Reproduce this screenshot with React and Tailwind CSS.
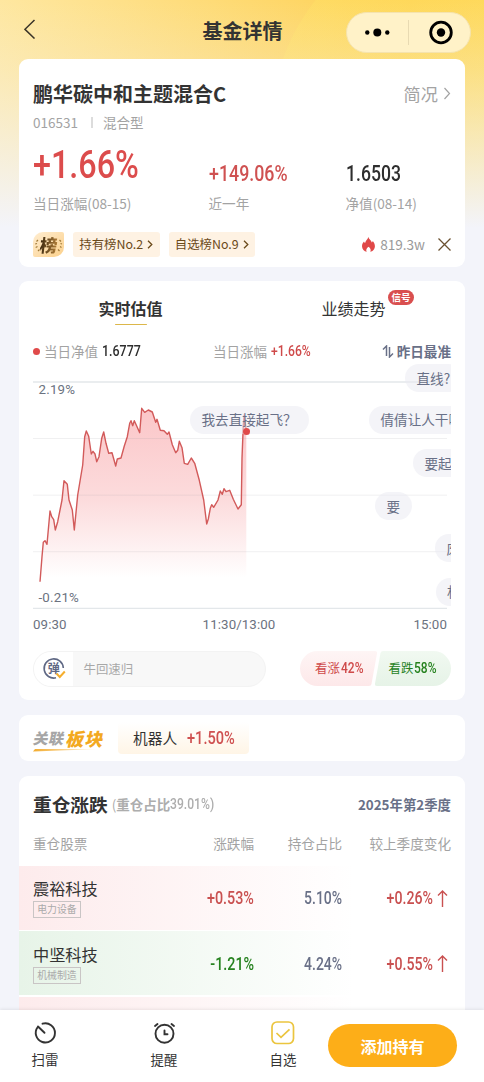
import React from 'react';

const stocks = [
  { name: '震裕科技', tag: '电力设备', change: '+0.53%', ratio: '5.10%', diff: '+0.26%', up: true },
  { name: '中坚科技', tag: '机械制造', change: '-1.21%', ratio: '4.24%', diff: '+0.55%', up: false },
];

// intraday valuation curve, in chart pixels
const points = [
  [7, 219.7], [9, 194.7], [10.3, 180.3], [12, 178.7], [14, 182.3], [17, 149], [18.7, 154.7], [20.7, 157.7],
  [22.3, 168], [24.7, 159.7], [29, 138], [31, 118.7], [34.3, 122.3], [36, 138], [39.3, 148], [41.3, 168],
  [44.7, 133], [49.7, 103], [51.7, 74.7], [53.3, 69], [55.7, 74.3], [58.3, 92], [60, 89.3], [62, 92],
  [63.7, 99.7], [66, 94.7], [68.7, 76.3], [70.7, 70], [73, 81.3], [75.7, 91.3], [79, 90.7], [82.7, 104],
  [84.3, 97], [88, 96], [91.3, 84], [94.3, 74.7], [96.7, 61.3], [98, 58.7], [99.7, 63.7], [101.3, 58.7],
  [103.7, 64], [106.7, 70.7], [108.7, 46.3], [111.7, 50.3], [115.3, 48], [119.3, 50], [122.7, 60.3], [124, 57.3],
  [127.3, 68.3], [131, 68.7], [134.3, 72.3], [136, 70], [139.3, 82.7], [142.7, 90.7], [144.7, 88.3], [146.3, 79.3],
  [149, 85.7], [151.3, 101.3], [154.7, 102.3], [158.3, 96], [161.7, 101.3], [166.3, 118.3], [170.7, 138], [173.7, 162],
  [175.3, 157], [177.3, 146.3], [178.7, 142.7], [180.7, 145.3], [185, 138], [187.3, 129], [189.3, 132.3], [191, 126.7],
  [193, 129.7], [196.7, 128.3], [200.3, 137.3], [205, 147], [208.3, 142.7], [209, 96.3], [210.3, 63], [211.3, 53],
  [213.3, 69],
];

const line = points.map((p) => p.join(',')).join(' ');

// condensed digits used for every price and percentage
function Num({ children, className = '' }) {
  return (
    <span className={`inline-block whitespace-nowrap font-['Roboto',sans-serif] font-medium ${className}`}>
      {children}
    </span>
  );
}

function Bubble({ children, className }) {
  return (
    <span className={`absolute flex h-7 items-center whitespace-nowrap rounded-full bg-[#eaeaf1]/50 pl-[11.5px] pr-[12px] text-[13.6px] text-[#697087] ${className}`}>
      {children}
    </span>
  );
}

function Header() {
  return (
    <header className="relative flex h-[59px] shrink-0 items-start justify-between pl-6 pr-[13px]">
      <svg width="115" height="20" viewBox="0 0 115 20" className="mt-[19px]" fill="none" stroke="#3a3428" strokeWidth="1.5">
        <path d="M10.5 1 1 10.3l9.500 9.200" />
      </svg>
      <h1 className="mt-[17px] h-7 text-[20px] font-bold leading-7 text-[#333]">基金详情</h1>
      <div className="mt-3 flex h-[41px] w-[125px] items-center rounded-full border border-[#f5e3ae] bg-[#fff2c8]">
        <svg width="123" height="39" viewBox="0 0 123 39" fill="none">
          <circle cx="20.300" cy="19.500" r="2.200" fill="#000" />
          <circle cx="30.300" cy="19.500" r="4" fill="#000" />
          <circle cx="40.300" cy="19.500" r="2.200" fill="#000" />
          <path d="M61.500 7v25" stroke="#e8dab2" />
          <circle cx="94" cy="19.500" r="10.300" stroke="#000" strokeWidth="2.800" />
          <circle cx="94" cy="19.500" r="4.200" fill="#000" />
        </svg>
      </div>
    </header>
  );
}

function RankBadge() {
  return (
    <div className="relative flex h-[25px] w-[31px] items-center justify-center rounded-bl-[2px] rounded-br-[10px] rounded-tl-[10px] rounded-tr-[2px] bg-linear-to-br from-[#ffedd0] to-[#fbd08a]">
      <svg width="31" height="25" viewBox="0 0 31 25" className="absolute inset-0" fill="none" stroke="#a07a38" strokeWidth="1.200">
        <path d="M5 8 3.500 9.500M4 11.500l-1.800.5M4.500 14.500l-1.800 1M6.500 17.500 5 19M26.500 8 28 9.500M27.500 11.500l1.500.5M27 14.500l1.500 1M25 17.500l1.500 1.500" />
      </svg>
      <span className="relative -skew-x-6 bg-linear-to-r from-[#3d2a10] to-[#b5813a] bg-clip-text text-[17.500px] font-black leading-[25px] text-transparent">榜</span>
    </div>
  );
}

function Chip({ children }) {
  return (
    <span className="flex h-[25px] w-[86.500px] items-center justify-center rounded-[3px] bg-[#fef2e3] text-[12.400px] text-[#6b4a1a]">
      {children}
      <svg width="6" height="9" viewBox="0 0 6 9" className="ml-1" fill="none" stroke="#6b4a1a" strokeWidth="1.300">
        <path d="m1 .8 3.800 3.700L1 8.200" />
      </svg>
    </span>
  );
}

function Summary() {
  return (
    <section className="h-[207.500px] shrink-0 rounded-[9px] bg-white px-[14px] pt-[21px]">
      <div className="flex h-7 items-center justify-between">
        <h2 className="text-[20px] font-bold text-[#333]">鹏华碳中和主题混合C</h2>
        <div className="flex items-center text-[17.200px] text-[#a3a3a3]">
          简况
          <svg width="8" height="13" viewBox="0 0 8 13" className="ml-[5px]" fill="none" stroke="#a3a3a3" strokeWidth="1.200">
            <path d="m1.500 1 5 5.500-5 5.500" />
          </svg>
        </div>
      </div>
      <div className="mt-1.5 flex h-[17px] items-center text-[13.500px] text-[#a3a3a3]">
        <span>016531</span>
        <span className="ml-[13.500px] mr-[10px] h-[11px] w-[1.500px] bg-[#dcdcdc]" />
        <span>混合型</span>
      </div>
      <div className="mt-[13.500px] flex h-[66.500px] text-[13.600px] text-[#a3a3a3]">
        <div className="w-[175.500px]">
          <div className="h-[50px]">
            <Num className="origin-left scale-x-[.84] text-[38.500px] leading-[40px] text-[#dc4c4c]">+1.66%</Num>
          </div>
          <div className="leading-4">当日涨幅(08-15)</div>
        </div>
        <div className="w-[137px]">
          <div className="flex h-[50px] items-start pt-[18.500px]">
            <Num className="origin-left scale-x-[.81] text-[22px] leading-[22px] text-[#cf5151]">+149.06%</Num>
          </div>
          <div className="leading-4">近一年</div>
        </div>
        <div>
          <div className="flex h-[50px] items-start pt-[18.500px]">
            <Num className="origin-left scale-x-[.8] text-[22px] leading-[22px] text-[#2e2e2e]">1.6503</Num>
          </div>
          <div className="leading-4">净值(08-14)</div>
        </div>
      </div>
      <div className="mt-[21px] flex h-[25px] items-center gap-[9px]">
        <RankBadge />
        <Chip>持有榜No.2</Chip>
        <Chip>自选榜No.9</Chip>
        <div className="ml-auto flex items-center text-[13.600px] text-[#999]">
          <svg width="13" height="15" viewBox="0 0 13 15" className="mr-[5px]">
            <path fill="#e04848" d="M6.300 0c.6 2.200 3 3.400 3.500 5.500.6-.3.9-.9 1-1.500 1.300 1.500 2.100 3.300 2.100 5.200 0 3-2.200 5.200-4.700 5.600.9-1.300.8-3.200-1.700-5-2.400 1.800-2.700 3.600-1.700 5C2.200 14.400 0 12.300 0 9.300c0-2 .9-3.600 2-4.800.2.900.6 1.400 1.100 1.600C3.400 3.600 5.800 2.500 6.300 0Z" />
          </svg>
          819.3w
          <svg width="13" height="13" viewBox="0 0 13 13" className="ml-[13px]" stroke="#6b5130" strokeWidth="1.300">
            <path d="m.5.5 12 12M12.500.5l-12 12" />
          </svg>
        </div>
      </div>
    </section>
  );
}

function Chart() {
  return (
    <div className="relative h-[247px] overflow-hidden font-['Roboto',sans-serif]">
      <svg width="418" height="247" viewBox="0 0 418 247" fill="none">
        <defs>
          <linearGradient id="area" x1="0" y1="46" x2="0" y2="216" gradientUnits="userSpaceOnUse">
            <stop offset="0" stopColor="#fbc6c8" />
            <stop offset="0.550" stopColor="#fcdcdd" />
            <stop offset="1" stopColor="#fff" />
          </linearGradient>
        </defs>
        <path d="M0 20h414M0 246.300h414" stroke="#e3e7ea" strokeWidth="1.300" />
        <polygon points={`7,219.7 ${line} 213.3,219.7`} fill="url(#area)" />
        <path d="M0 76.500h414M0 133.200h414M0 189.700h414" stroke="#8a8a96" strokeOpacity=".13" />
        <polyline points={line} stroke="#d25a5a" strokeWidth="1.400" strokeLinejoin="round" />
      </svg>
      <span className="absolute left-[5.500px] top-5 text-[13.300px] leading-4 tracking-[.2px] text-[#6b7280]">2.19%</span>
      <span className="absolute left-[5.500px] top-[228px] text-[13.300px] leading-4 tracking-[.2px] text-[#6b7280]">-0.21%</span>
      <div className="absolute inset-0 font-['Noto_Sans_CJK_SC',sans-serif]">
        <Bubble className="left-[372px] top-[2px]">直线?</Bubble>
        <Bubble className="left-[157px] top-[43.500px]">我去直接起飞？</Bubble>
        <Bubble className="left-[336px] top-[43.500px]">倩倩让人干嘛</Bubble>
        <Bubble className="left-[380px] top-[87px]">要起飞</Bubble>
        <Bubble className="left-[342px] top-[130px]">要</Bubble>
        <Bubble className="left-[402px] top-[172px]">废了</Bubble>
        <Bubble className="left-[402.500px] top-[215.500px]">机会</Bubble>
      </div>
      {/* latest price marker sits above the comments */}
      <span className="absolute left-[210px] top-[66px] size-[6.500px] rounded-full bg-[#e04a4a]" />
    </div>
  );
}

function Valuation() {
  return (
    <section className="h-[419px] shrink-0 rounded-[9px] bg-white px-[14px]">
      <div className="-mx-[14px] flex h-[45px] text-[16px] text-[#333]">
        <div className="flex flex-1 flex-col items-center pt-[15.500px] font-bold leading-[22px]">
          实时估值
          <span className="mt-[5px] h-[1.500px] w-8 rounded-full bg-[#dcb74a]" />
        </div>
        <div className="flex flex-1 justify-center pt-[15.500px] leading-[22px]">
          <span className="relative">
            业绩走势
            <span className="absolute -right-[28.500px] -top-[7px] flex h-[15px] w-[26px] items-center justify-center rounded-full bg-[#d94f4f] text-[9.500px] font-bold text-white">信号</span>
          </span>
        </div>
      </div>
      <div className="mt-[15px] flex h-5 items-center justify-between text-[13.500px] text-[#a3a3a3]">
        <div className="flex w-[180px] items-center">
          <span className="mr-1 size-[7px] rounded-full bg-[#e04a4a]" />
          当日净值
          <Num className="ml-[4px] origin-left scale-x-[.82] text-[15.200px] text-[#2e2e2e]">1.6777</Num>
        </div>
        <div className="flex w-[110px] items-center">
          当日涨幅
          <Num className="ml-[4px] origin-left scale-x-[.8] text-[15.200px] text-[#cf4a4a]">+1.66%</Num>
        </div>
        <div className="flex w-[128px] items-center justify-end text-[13.600px] font-bold text-[#697087]">
          <svg width="12" height="13" viewBox="0 0 12 13" className="mr-[3px]" fill="none" stroke="#697087" strokeWidth="1.500">
            <path d="M1 4.500 4.500 1v10M7.500 2v10L11 8.500" />
          </svg>
          昨日最准
        </div>
      </div>
      <div className="pt-px">
        <Chart />
      </div>
      <div className="mr-[4px] mt-[8px] flex h-4 items-center justify-between font-['Roboto',sans-serif] text-[13.300px] tracking-[.1px] text-[#6b7280]">
        <span>09:30</span>
        <span className="ml-[-2px]">11:30/13:00</span>
        <span>15:00</span>
      </div>
      <div className="mt-[17.500px] flex h-9 items-center justify-between">
        <div className="flex h-9 w-[233px] overflow-hidden rounded-full border-[1.500px] border-[#f3f3f3] bg-[#f8f8f8]">
          <div className="flex w-[39px] items-center justify-center bg-white">
            <svg width="24" height="24" viewBox="0 0 24 24" fill="none">
              <path d="M21.300 11A9.600 9.600 0 1 0 14 20.800" stroke="#5f6884" strokeWidth="1.600" />
              <text x="11.700" y="15.900" textAnchor="middle" fontSize="12" fontWeight="700" fill="#5f6884">弹</text>
              <path d="m14.500 16.500 3.300 3.500 5-5.500" stroke="#f5ae2e" strokeWidth="2" />
            </svg>
          </div>
          <span className="ml-[10.500px] self-center pt-px text-[12.400px] text-[#a8a8a8]">牛回速归</span>
        </div>
        <div className="relative flex h-[35px] w-[151px]">
          <svg width="151" height="35" viewBox="0 0 151 35" className="absolute inset-0">
            <defs>
              <linearGradient id="rise" x1="0" y1="0" x2="0" y2="1">
                <stop stopColor="#fef5f5" />
                <stop offset="1" stopColor="#fde8e9" />
              </linearGradient>
              <linearGradient id="fall" x1="0" y1="0" x2="0" y2="1">
                <stop stopColor="#f1f9f1" />
                <stop offset="1" stopColor="#e6f3e7" />
              </linearGradient>
            </defs>
            <path fill="url(#rise)" d="M17.500 0H75q2.500 0 2 2.500L71.500 33q-.4 2-2.500 2H17.500a17.500 17.500 0 0 1 0-35Z" />
            <path fill="url(#fall)" d="M83 0h50.500a17.500 17.500 0 0 1 0 35H77q-2.500 0-2-2.500L80.500 2Q81 0 83 0Z" />
          </svg>
          <div className="relative flex w-[73px] items-center pl-[15px] text-[12.400px] text-[#cf4a4a]">
            看涨<Num className="ml-px origin-left scale-x-[.79] text-[15.200px]">42%</Num>
          </div>
          <div className="relative flex items-center pl-[15.500px] text-[12.400px] text-[#26821f]">
            看跌<Num className="ml-px origin-left scale-x-[.79] text-[15.200px]">58%</Num>
          </div>
        </div>
      </div>
    </section>
  );
}

function Sector() {
  return (
    <section className="flex h-[46.500px] shrink-0 items-center rounded-[9px] bg-white px-[14px]">
      <div className="relative flex h-[26px] w-[72px] items-center font-black leading-none">
        <span className="ml-px -skew-x-12 text-[15px] tracking-[.5px] text-[#a6a6a6]">关联</span>
        <span className="ml-[2px] -skew-x-12 text-[18px] tracking-[1px] text-[#f3a921]">板块</span>
        <svg width="68" height="4" viewBox="0 0 68 4" className="absolute -bottom-px left-0">
          <defs>
            <linearGradient id="swoosh">
              <stop stopColor="#f3ac2e" />
              <stop offset="1" stopColor="#f3ac2e" stopOpacity="0" />
            </linearGradient>
          </defs>
          <path d="M2 1h66L0 3.500Z" fill="url(#swoosh)" />
        </svg>
      </div>
      <div className="ml-[13px] mt-px flex h-8 w-[131px] items-center rounded-[4px] bg-linear-to-b from-white to-[#fff5e6] pl-[15px] text-[14.700px] text-[#333]">
        机器人
        <Num className="ml-[9.500px] origin-left scale-x-[.82] text-[17.800px] text-[#cf5151]">+1.50%</Num>
      </div>
    </section>
  );
}

function StockRow({ stock }) {
  return (
    <div className={`flex h-[64px] items-center bg-linear-to-r px-[14px] ${stock.up ? 'from-[#fdebec] to-white to-75%' : 'from-[#e7f4e8] to-white to-75%'}`}>
      <div className="w-[110px]">
        <div className="text-[16.200px] leading-[22px] text-[#333]">{stock.name}</div>
        <span className="mt-[2px] flex h-[17px] w-12 items-center justify-center border border-[#c9c5c5] text-[9.900px] text-[#aaa]">{stock.tag}</span>
      </div>
      <div className={`flex flex-1 justify-end pt-[2px] text-[17.700px] ${stock.up ? 'text-[#c95050]' : 'text-[#26821f]'}`}>
        <Num className="origin-right scale-x-[.81]">{stock.change}</Num>
      </div>
      <div className="flex w-[88px] justify-end pt-[2px] text-[17.700px] text-[#697087]">
        <Num className="origin-right scale-x-[.79]">{stock.ratio}</Num>
      </div>
      <div className="flex w-[109px] items-center justify-end pt-[2px] text-[17.700px] text-[#c95050]">
        <Num className="origin-right scale-x-[.8]">{stock.diff}</Num>
        <svg width="11" height="17" viewBox="0 0 11 17" className="ml-1 mr-[3px]" fill="none" stroke="#c95050" strokeWidth="1.400">
          <path d="M5.500 17V1M1 5.500 5.500 1 10 5.500" />
        </svg>
      </div>
    </div>
  );
}

function Holdings() {
  return (
    <section className="shrink-0 rounded-t-[9px] bg-white">
      <div className="flex h-[58px] items-center px-[14px]">
        <h3 className="text-[18.700px] font-bold text-[#333]">重仓涨跌</h3>
        <span className="ml-1 flex items-center text-[13.500px] font-bold text-[#adadad]">
          <span className="font-normal">(</span>重仓占比
          <Num className="-mr-[9px] origin-left scale-x-[.82] text-[14.800px] text-[#adadad]">39.01%)</Num>
        </span>
        <span className="ml-auto text-[13.400px] font-bold text-[#697087]">2025年第2季度</span>
      </div>
      <div className="flex h-5 items-center px-[14px] text-[13.600px] text-[#a3a3a3]">
        <span className="w-[110px]">重仓股票</span>
        <span className="flex-1 text-right">涨跌幅</span>
        <span className="w-[88px] text-right">持仓占比</span>
        <span className="w-[109px] text-right">较上季度变化</span>
      </div>
      <div className="mt-3 flex flex-col gap-[1.500px]">
        {stocks.map((s) => (
          <StockRow key={s.name} stock={s} />
        ))}
        {/* top edge of the next row, cut by the bottom bar */}
        <div className="h-4 bg-linear-to-r from-[#fdebec] to-white to-75%" />
      </div>
    </section>
  );
}

function BottomBar() {
  return (
    <footer className="relative flex h-[72px] shrink-0 items-start bg-white pl-[25px] text-[13.400px] text-[#333] shadow-[0_-1px_3px_rgba(0,0,0,0.08)]">
      <button className="flex w-10 flex-col items-center pt-[11px]">
        <svg width="24" height="24" viewBox="0 0 24 24" fill="none" stroke="#333" strokeWidth="1.900">
          <path d="M9.500 2.700A9.600 9.600 0 1 1 4.600 6.200M5 5.500l6.500 6.300" strokeLinecap="round" />
        </svg>
        <span className="mt-[4px] leading-5">扫雷</span>
      </button>
      <button className="ml-[79px] flex w-10 flex-col items-center pt-[11px]">
        <svg width="24" height="24" viewBox="0 0 24 24" fill="none" stroke="#333" strokeWidth="1.900" strokeLinecap="round">
          <circle cx="12.500" cy="12.700" r="9" />
          <path d="M12.500 9.500v3.700h3M3 5l2.500-2M22 5l-2.500-2" />
        </svg>
        <span className="mt-[4px] leading-5">提醒</span>
      </button>
      <button className="ml-[79px] flex w-10 flex-col items-center pt-[11px]">
        <svg width="24" height="24" viewBox="0 0 24 24" fill="none" stroke="#ebc53f" strokeWidth="1.700">
          <rect x="1" y="1" width="21.500" height="21.500" rx="5" />
          <path d="m5.500 12 4.500 4.300 8.500-8" />
        </svg>
        <span className="mt-[4px] leading-5">自选</span>
      </button>
      <button className="ml-[25px] mt-[14px] h-[43px] w-[129px] rounded-full bg-[#fdae18] text-[16px] font-bold text-white">添加持有</button>
    </footer>
  );
}

export default function App() {
  return (
    <div className="flex h-[1082px] w-[484px] flex-col overflow-hidden bg-[#f3f4fa] font-['Noto_Sans_CJK_SC',sans-serif]">
      <div className="flex min-h-0 flex-1 flex-col overflow-hidden bg-[linear-gradient(to_bottom,rgba(243,244,250,0)_0px,rgba(243,244,250,0.25)_70px,#f3f4fa_228px),radial-gradient(circle_at_480px_130px,rgba(255,224,100,0.5)_209px,rgba(255,224,100,0)_210px),linear-gradient(100deg,#fee7a0_0%,#fed050_62%,#ffd75a_100%)]">
        <Header />
        <main className="flex flex-col gap-[14.500px] pl-[19px] pr-[19px]">
          <Summary />
          <Valuation />
          <Sector />
          <Holdings />
        </main>
      </div>
      <BottomBar />
    </div>
  );
}
